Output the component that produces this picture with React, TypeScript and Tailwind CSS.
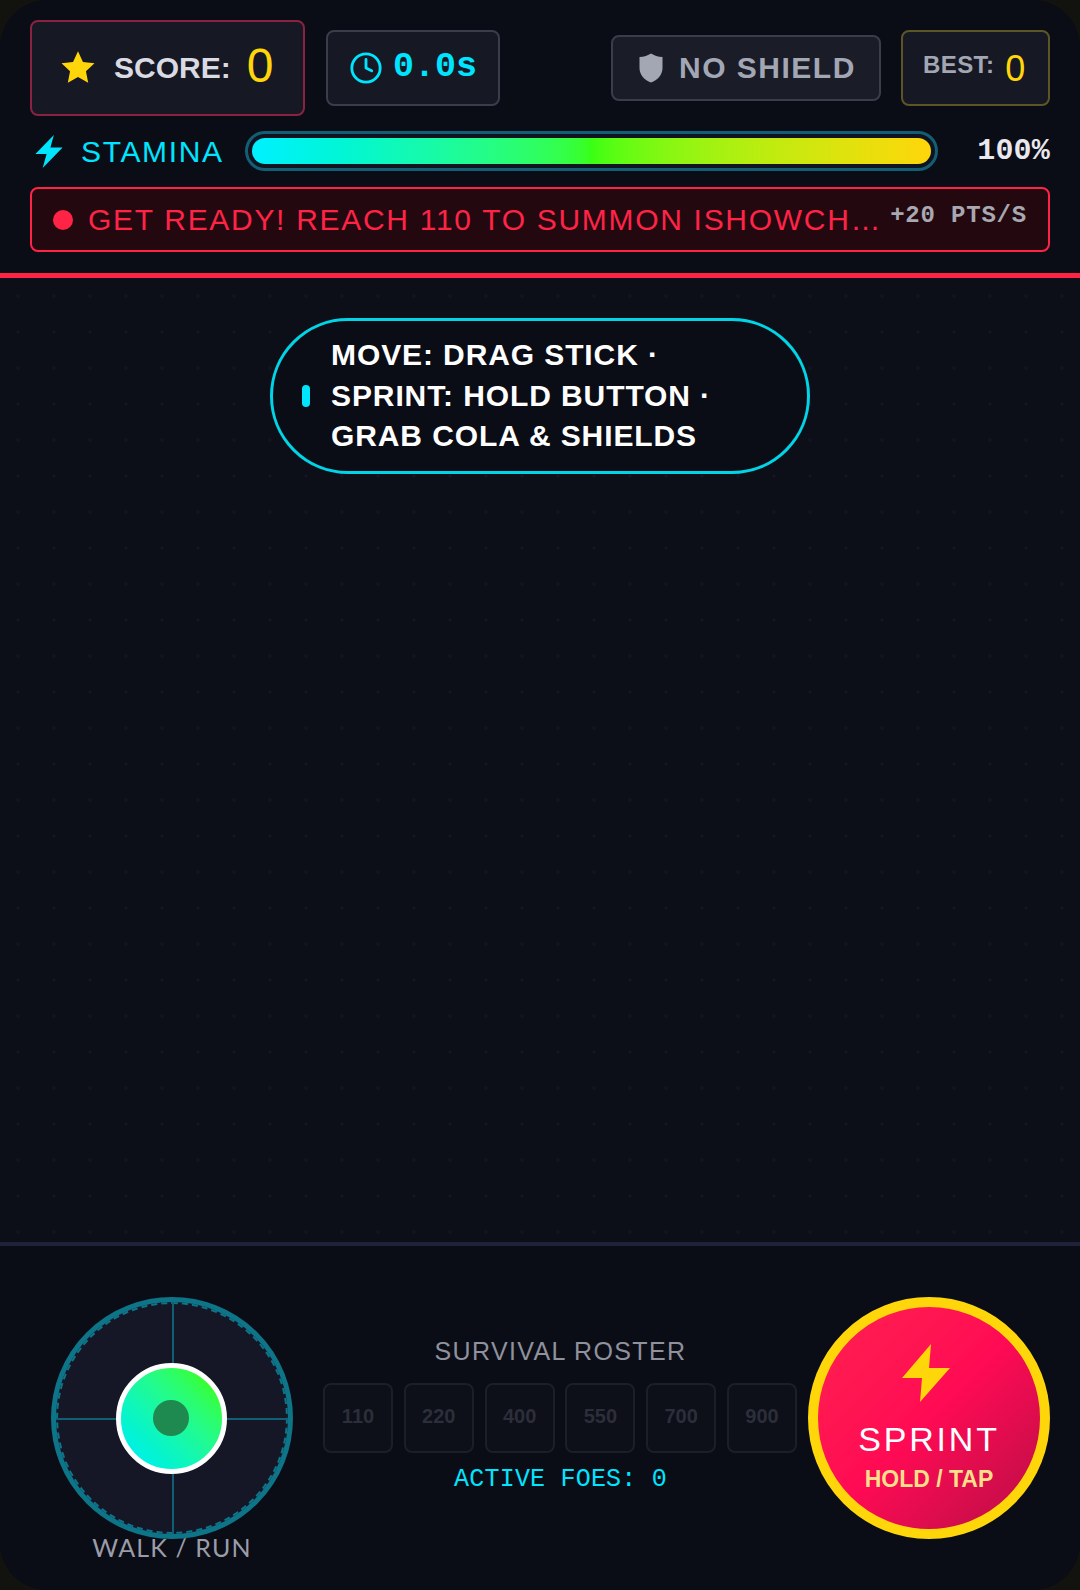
import { Clock } from 'lucide-react'

const sans = 'font-["Liberation_Sans",Arial,sans-serif]'
const mono = 'font-["Liberation_Mono","Courier_New",monospace]'

const roster = ['110', '220', '400', '550', '700', '900']

function Bolt({ className }: { className: string }) {
  return (
    <svg viewBox="0 0 28 34" className={className} fill="currentColor">
      <polygon points="19,0 0,19.5 11.5,19.5 7.5,34 28,13 15.5,13" />
    </svg>
  )
}

function TopBar() {
  return (
    <header className="flex flex-col border-b-[5px] border-[#ff2346] bg-[#0a0c16] px-[30px] pt-5 pb-[21px]">
      <div className="flex h-[96px] items-center">
        <div className="flex h-[96px] w-[275px] items-center rounded-[8px] border-2 border-[#8a2342] bg-[#161824] pl-[28px]">
          <svg viewBox="0 0 24 24" className="h-[36px] w-[36px] -translate-y-[1px] text-[#ffd60a]" fill="currentColor">
            <polygon points="12,1.5 15.3,8.6 23,9.5 17.3,14.8 18.8,22.5 12,18.7 5.2,22.5 6.7,14.8 1,9.5 8.7,8.6" />
          </svg>
          <span className="ml-[18px] -translate-y-[1px] text-[30px] font-bold text-[#d9dae2]">SCORE:</span>
          <span className="ml-4 -translate-y-[2px] text-[48px] leading-none text-[#ffd60a]">0</span>
        </div>
        <div className="ml-[21px] flex h-[76px] w-[174px] items-center rounded-[8px] border-2 border-[#3a3d4a] bg-[#161824] pl-[21px]">
          <Clock className="h-[34px] w-[34px] text-[#00e5ff]" strokeWidth={2} />
          <span className={`${mono} ml-[10px] -translate-y-[1px] text-[35px] font-bold text-[#00e5ff]`}>0.0s</span>
        </div>
        <div className="ml-auto flex h-[66px] w-[270px] items-center rounded-[8px] border-2 border-[#3a3d4a] bg-[#1a1c28] pl-[26px]">
          <svg viewBox="0 0 24 30" className="h-[30px] w-[24px] text-[#a3a7b3]" fill="currentColor">
            <path d="M12 0.5 C15 2.5 19 3.8 23.5 4 V15 C23.5 22 18.5 27 12 29.5 C5.5 27 0.5 22 0.5 15 V4 C5 3.8 9 2.5 12 0.5 Z" />
          </svg>
          <span className="ml-[16px] -translate-y-[1px] text-[30px] font-bold tracking-[1.5px] text-[#a3a7b3]">NO SHIELD</span>
        </div>
        <div className="ml-5 flex h-[76px] w-[149px] items-center rounded-[8px] border-2 border-[#5e5526] bg-[#161824] pl-[20px]">
          <span className="-translate-y-[3px] text-[24px] font-bold tracking-[0.4px] text-[#a3a7b3]">BEST:</span>
          <span className="ml-[11px] translate-y-[1px] text-[36px] leading-none text-[#ffd60a]">0</span>
        </div>
      </div>

      <div className="mt-[15px] flex h-[40px] items-center">
        <Bolt className="ml-[5px] h-[33px] w-[28px] text-[#00e5ff]" />
        <span className="ml-[18px] text-[30px] tracking-[1.65px] text-[#00e5ff]">STAMINA</span>
        <div className="ml-[21px] flex h-[40px] w-[693px] items-center rounded-full border-[3px] border-[#125f75] bg-[#101320] px-[4px]">
          <div className="h-[26px] w-full rounded-full bg-gradient-to-r from-[#00f0ff] via-[#39ff14] to-[#ffd60a]" />
        </div>
        <span className={`${mono} ml-auto text-[30px] font-bold tracking-[0.2px] text-[#e8e8ee]`}>100%</span>
      </div>

      <div className="mt-[16px] flex h-[65px] items-center rounded-[8px] border-2 border-[#ff2346] bg-[#240810] pr-[21px] pl-[21px]">
        <span className="h-[20px] w-[20px] shrink-0 rounded-full bg-[#ff2346]" />
        <span className="ml-[15px] min-w-0 flex-1 truncate text-[30px] tracking-[1.7px] text-[#ff2346]">
          GET READY! REACH 110 TO SUMMON ISHOWCHICKEN
        </span>
        <span className={`${mono} ml-[4px] shrink-0 -translate-y-[4px] text-[24px] font-bold tracking-[0.8px] text-[#a8a8b2]`}>
          +20 PTS/S
        </span>
      </div>
    </header>
  )
}

function Arena() {
  return (
    <main className="flex h-[964px] justify-center bg-[#0c0e18] bg-[radial-gradient(circle,#12141f_1.5px,transparent_2px)] bg-[size:36px_36px] pt-[40px]">
      <div className="flex h-[156px] w-[540px] items-center rounded-full border-[3px] border-[#00d4e6] bg-[#0a0c16] pl-[29px]">
        <span className="h-[22px] w-[8px] shrink-0 rounded-full bg-[#00e5ff]" />
        <p className="ml-[21px] w-[420px] text-[30px] leading-[40.5px] font-bold tracking-[0.9px] text-white">
          MOVE: DRAG STICK · SPRINT: HOLD BUTTON · GRAB COLA &amp; SHIELDS
        </p>
      </div>
    </main>
  )
}

function Joystick() {
  return (
    <div className="ml-[21px] flex w-[242px] shrink-0 flex-col items-center">
      <div className="relative flex h-[242px] w-[242px] items-center justify-center rounded-full border-[5px] border-[#0e7488] bg-[#151626]">
        <div className="absolute inset-0 rounded-full border-2 border-dashed border-[#0e7488]" />
        <div className="absolute top-0 bottom-0 left-1/2 w-[2px] bg-[#0f6074]" />
        <div className="absolute top-1/2 right-0 left-0 h-[2px] bg-[#0f6074]" />
        <div className="relative flex h-[111px] w-[111px] -translate-x-[1px] items-center justify-center rounded-full border-[5px] border-white bg-gradient-to-tr from-[#00f0e8] from-[12%] to-[#39ff14] to-[88%]">
          <div className="h-[36px] w-[36px] rounded-full bg-[#1f8a50]" />
        </div>
      </div>
      <span className="-mt-[10px] font-['Lato',sans-serif] text-[25px] tracking-[1.1px] text-[#9a9ca8]">WALK / RUN</span>
    </div>
  )
}

function Roster() {
  return (
    <div className="ml-[30px] flex w-[475px] shrink-0 flex-col items-center pt-[39px]">
      <span className="text-[25px] leading-[30px] tracking-[1.35px] text-[#8f919c]">SURVIVAL ROSTER</span>
      <div className="mt-[17px] flex w-[474px] justify-between self-start">
        {roster.map((n) => (
          <div
            key={n}
            className="flex h-[70px] w-[70px] items-center justify-center rounded-[8px] border-2 border-[#1c1e2a] bg-[#0d0f19] pb-[4px] text-[20px] font-bold text-[#2c2e3a]"
          >
            {n}
          </div>
        ))}
      </div>
      <span className={`${mono} mt-[12px] text-[25px] leading-[30px] tracking-[0.2px] text-[#00e5ff]`}>ACTIVE FOES: 0</span>
    </div>
  )
}

function SprintButton() {
  return (
    <div className="ml-[10px] flex h-[242px] w-[242px] shrink-0 flex-col items-center rounded-full border-[10px] border-[#ffd60a] bg-gradient-to-br from-[#ff1f4e] via-[#ff0a54] to-[#b80d45]">
      <svg viewBox="0 0 48 58" className="mt-[37px] -ml-[6px] h-[58px] w-[48px] text-[#ffd60a]" fill="currentColor">
        <polygon points="29,0 0,34 20,34 18,58 48,24 27,24" />
      </svg>
      <span className="mt-[16px] text-[34px] leading-[42px] tracking-[2.8px] text-white">SPRINT</span>
      <span className="mt-[6px] text-[23px] leading-[26px] font-bold text-[#ffdf8a]">HOLD / TAP</span>
    </div>
  )
}

export default function App() {
  return (
    <div className={`${sans} h-[1590px] w-[1080px] bg-[#12130f]`}>
      <div className="h-[1590px] overflow-hidden rounded-[48px] bg-[#0a0c16]">
        <TopBar />
        <Arena />
        <footer className="flex h-[348px] border-t-[4px] border-[#20213a] bg-[#0a0c16] px-[30px] pt-[51px]">
          <Joystick />
          <Roster />
          <SprintButton />
        </footer>
      </div>
    </div>
  )
}
